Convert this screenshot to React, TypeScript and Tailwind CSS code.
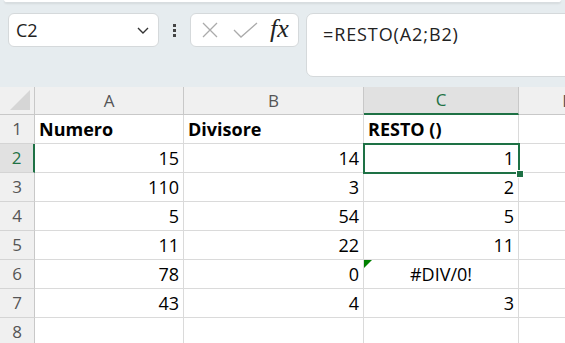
import React from "react";

const cols = [
  { w: 149, label: "A" },
  { w: 180, label: "B" },
  { w: 155, label: "C" },
  { w: 100, label: "D" },
];

type Cell = { t: string; align?: "left" | "right" | "center"; bold?: boolean; err?: boolean };

const rows: Cell[][] = [
  [{ t: "Numero", bold: true }, { t: "Divisore", bold: true }, { t: "RESTO ()", bold: true }, { t: "" }],
  [{ t: "15", align: "right" }, { t: "14", align: "right" }, { t: "1", align: "right" }, { t: "" }],
  [{ t: "110", align: "right" }, { t: "3", align: "right" }, { t: "2", align: "right" }, { t: "" }],
  [{ t: "5", align: "right" }, { t: "54", align: "right" }, { t: "5", align: "right" }, { t: "" }],
  [{ t: "11", align: "right" }, { t: "22", align: "right" }, { t: "11", align: "right" }, { t: "" }],
  [{ t: "78", align: "right" }, { t: "0", align: "right" }, { t: "#DIV/0!", align: "center", err: true }, { t: "" }],
  [{ t: "43", align: "right" }, { t: "4", align: "right" }, { t: "3", align: "right" }, { t: "" }],
  [{ t: "" }, { t: "" }, { t: "" }, { t: "" }],
];

export default function App() {
  return (
    <div
      className="relative w-[565px] h-[343px] overflow-hidden bg-white"
      style={{ fontFamily: '"Open Sans", "Liberation Sans", sans-serif' }}
    >
      {/* toolbar */}
      <div className="h-[87px] bg-[#e6ecef] flex flex-col">
        <div className="h-[3px] mx-[4px] bg-white rounded-b-[4px] border-b border-[#d8dde0] shadow-[0_1px_2px_rgba(0,0,0,0.08)]" />
        <div className="flex items-start pl-[8px] pt-[10px]">
          <div className="shrink-0 w-[151px] h-[34px] rounded-[6px] bg-white border border-[#d5d9db] flex items-center justify-between pl-[7px] pr-[8px]">
            <span className="text-[18px] text-[#222] leading-none">C2</span>
            <svg width="14" height="14" viewBox="0 0 14 14" fill="none" stroke="#333" strokeWidth="1.4">
              <path d="M2 5 L7 10 L12 5" />
            </svg>
          </div>
          <div className="shrink-0 w-[31px] h-[34px] flex flex-col items-center justify-center gap-[2px]">
            <div className="w-[3px] h-[3px] bg-[#444]" />
            <div className="w-[3px] h-[3px] bg-[#444]" />
            <div className="w-[3px] h-[3px] bg-[#444]" />
          </div>
          <div className="shrink-0 w-[109px] h-[34px] rounded-[6px] bg-white border border-[#d5d9db] flex items-center pl-[10px]">
            <svg className="shrink-0" width="18" height="18" viewBox="0 0 18 18" fill="none" stroke="#ababab" strokeWidth="1.3">
              <path d="M2 2 L16 16 M16 2 L2 16" />
            </svg>
            <svg className="shrink-0 ml-[14px]" width="26" height="18" viewBox="0 0 26 18" fill="none" stroke="#ababab" strokeWidth="1.3">
              <path d="M1 9 L8 16 L24 2" />
            </svg>
            <span
              className="ml-[11px] text-[26px] italic text-[#222] leading-none -mt-[3px]"
              style={{ fontFamily: '"Liberation Serif", serif' }}
            >
              fx
            </span>
          </div>
          <div className="shrink-0 ml-[7px] w-[280px] h-[64px] rounded-[7px] bg-white border border-[#d5d9db] pl-[16px] pt-[7px]">
            <span className="text-[18px] tracking-[0.9px] text-[#222]">=RESTO(A2;B2)</span>
          </div>
        </div>
      </div>

      {/* grid */}
      <div className="grid grid-cols-[35px_149px_180px_155px_100px] grid-rows-[28px_repeat(8,29px)] text-[18px] text-black">
        {/* corner */}
        <div className="relative bg-[#f0f0f0] border-r border-b border-[#c8c8c8]">
          <div
            className="absolute right-[4px] bottom-[4px] w-[20px] h-[20px] bg-[#d6d6d6]"
            style={{ clipPath: "polygon(100% 0, 100% 100%, 0 100%)" }}
          />
        </div>
        {cols.map((c) => {
          const sel = c.label === "C";
          return (
            <div
              key={c.label}
              className={
                sel
                  ? "bg-[#e1e1e1] border-r border-[#c8c8c8] border-b-2 border-b-[#1e7145] flex items-center justify-center text-[17px] text-[#1e7145]"
                  : "bg-[#f0f0f0] border-r border-b border-[#c8c8c8] flex items-center justify-center text-[17px] text-[#555]"
              }
            >
              {c.label}
            </div>
          );
        })}
        {rows.map((r, ri) => (
          <React.Fragment key={ri}>
            <div
              className={
                ri === 1
                  ? "bg-[#e1e1e1] border-b border-[#d4d4d4] border-r-2 border-r-[#1e7145] flex items-center justify-center text-[17px] text-[#1e7145]"
                  : "bg-[#f0f0f0] border-b border-r border-[#d4d4d4] border-r-[#c8c8c8] flex items-center justify-center text-[17px] text-[#555]"
              }
            >
              {ri + 1}
            </div>
            {r.map((cell, ci) => (
              <div
                key={ci}
                className={
                  "relative border-r border-b border-[#dadada] flex items-center px-[4px] whitespace-nowrap " +
                  (cell.align === "right"
                    ? "justify-end"
                    : cell.align === "center"
                    ? "justify-center"
                    : "justify-start") +
                  (cell.bold ? " font-bold" : "")
                }
              >
                {cell.err && (
                  <div
                    className="absolute left-0 top-0 w-[8px] h-[8px] bg-[#008000]"
                    style={{ clipPath: "polygon(0 0, 100% 0, 0 100%)" }}
                  />
                )}
                {cell.t}
              </div>
            ))}
          </React.Fragment>
        ))}
      </div>

      {/* selection overlay on C2 */}
      <div className="absolute left-[363px] top-[143px] w-[157px] h-[31px] border-2 border-[#1e7145] pointer-events-none" />
      <div className="absolute left-[516px] top-[170px] w-[6px] h-[6px] bg-[#1e7145] border border-white box-content" />
    </div>
  );
}
